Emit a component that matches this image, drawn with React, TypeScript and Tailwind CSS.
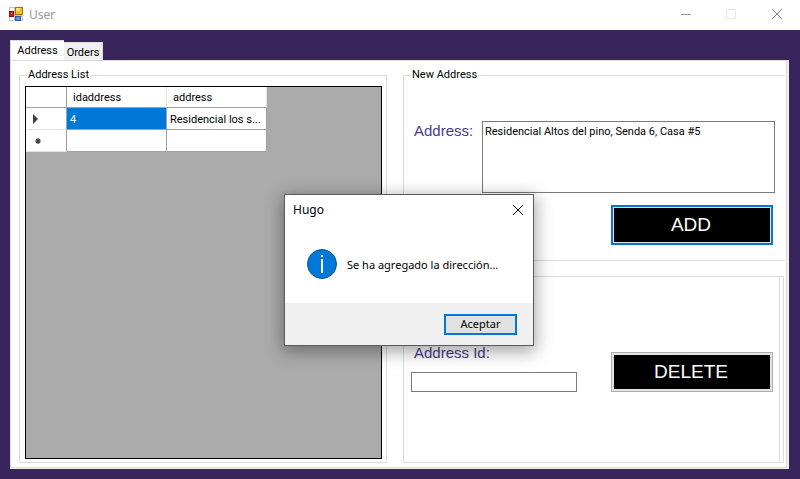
import { useState } from "react";

const ui = "font-['Roboto','Liberation_Sans',Arial,sans-serif]";
const segoe = "font-['Noto_Sans','Open_Sans',sans-serif]";
const large = "font-['Liberation_Sans',Arial,sans-serif]";

function FormIcon() {
  return (
    <svg width="14" height="14" viewBox="0 0 14 14" shapeRendering="crispEdges" aria-hidden="true">
      <rect width="14" height="14" fill="#c4c4c4" />
      <path d="M1 1h4v3H1zM1 10h4v3H1zM12 10h1v3h-1z" fill="#fff" />
      <rect x="0" y="4" width="5" height="6" fill="#8f1010" />
      <rect x="1" y="5" width="3" height="4" fill="#d8201c" />
      <rect x="2" y="6" width="1" height="1" fill="#f08a80" />
      <rect x="6" y="0" width="8" height="8" fill="#a87400" />
      <rect x="7" y="1" width="6" height="6" fill="#f5bd1f" />
      <rect x="7" y="1" width="4" height="3" fill="#ffe07a" />
      <rect x="6" y="9" width="6" height="5" fill="#2c5cb8" />
      <rect x="7" y="10" width="4" height="3" fill="#5a94ee" />
    </svg>
  );
}

function TitleBar() {
  return (
    <header className={`flex h-[30px] items-start justify-between bg-white pl-[9px] ${segoe}`}>
      <div className="flex h-[28px] items-center gap-[6px]">
        <FormIcon />
        <h1 className="pt-[2px] text-[12px] leading-4 text-[#999]">User</h1>
      </div>
      <div className="flex">
        <button type="button" aria-label="Minimize" className="flex h-[28px] w-[46px] items-center justify-center">
          <svg width="12" height="10" shapeRendering="crispEdges"><path d="M2 5h10v1H2z" fill="#999" /></svg>
        </button>
        <button type="button" aria-label="Maximize" disabled className="flex h-[28px] w-[46px] items-center justify-center">
          <svg width="10" height="10"><path d="M.5.5h9v9h-9z" fill="none" stroke="#e6e6e6" /></svg>
        </button>
        <button type="button" aria-label="Close" className="flex h-[28px] w-[46px] items-center justify-center">
          <svg width="10" height="10"><path d="M0 0l10 10M10 0L0 10" stroke="#888" /></svg>
        </button>
      </div>
    </header>
  );
}

function AddressTable() {
  return (
    <div className="grow border border-black bg-[#ababab]">
      <table className="table-fixed border-separate border-spacing-0 bg-white text-[11px] leading-4">
        <colgroup>
          <col className="w-[41px]" />
          <col className="w-[100px]" />
          <col className="w-[100px]" />
        </colgroup>
        <thead>
          <tr className="h-[21px]">
            <th className="w-[41px] border-r border-b border-[#a0a0a0] p-0" />
            <th className="w-[100px] border-r border-b border-r-[#e3e3e3] border-b-[#a0a0a0] p-0 pt-[2px] pl-[6px] text-left font-normal">idaddress</th>
            <th className="w-[100px] border-r border-b border-r-[#e3e3e3] border-b-[#a0a0a0] p-0 pt-[2px] pl-[6px] text-left font-normal">address</th>
          </tr>
        </thead>
        <tbody>
          <tr className="h-[22px]">
            <td className="border-r border-b border-r-[#a0a0a0] border-b-[#e3e3e3] p-0 pl-[7px]">
              <svg width="6" height="10"><path d="M0 0l5 5-5 5z" fill="#404040" /></svg>
            </td>
            <td className="border-r border-b border-[#a0a0a0] bg-[#0078d7] p-0 pt-[2px] pl-[3px] text-white">4</td>
            <td className="border-r border-b border-[#a0a0a0] p-0 pt-[2px] pl-[3px] whitespace-nowrap">Residencial los s...</td>
          </tr>
          <tr className="h-[22px]">
            <td className="border-r border-b border-r-[#a0a0a0] border-b-[#e3e3e3] p-0 pl-[9px]">
              <svg width="6" height="6"><path d="M3 0v6M0 3h6M1 1l4 4M5 1L1 5" stroke="#404040" strokeWidth="1.2" /></svg>
            </td>
            <td className="border-r border-b border-[#a0a0a0] p-0" />
            <td className="border-r border-b border-[#a0a0a0] p-0" />
          </tr>
        </tbody>
      </table>
    </div>
  );
}

function MessageBox({ onClose }: { onClose: () => void }) {
  return (
    <div
      role="dialog"
      aria-label="Hugo"
      className={`absolute top-[194px] left-[284px] flex h-[152px] w-[250px] flex-col border border-[#5a5a5a] bg-white text-black shadow-[0_4px_16px_2px_rgba(0,0,0,0.35)] ${segoe}`}
    >
      <div className="flex h-[30px] items-center justify-between pr-[10px] pl-2">
        <h2 className="text-[12px] leading-4">Hugo</h2>
        <button type="button" aria-label="Close" onClick={onClose}>
          <svg width="10" height="10"><path d="M0 0l10 10M10 0L0 10" stroke="#000" /></svg>
        </button>
      </div>
      <div className="flex grow items-center gap-[10px] pl-[22px]">
        <svg width="30" height="30" aria-hidden="true">
          <circle cx="15" cy="15" r="14.5" fill="#0078d7" stroke="#10548c" />
          <path d="M14 6h2v2h-2zM14 10h2v14h-2z" fill="#fff" />
        </svg>
        <p className="pt-[2px] text-[11px] leading-4">Se ha agregado la dirección...</p>
      </div>
      <div className="flex h-[42px] items-center justify-end bg-[#f0f0f0] pr-4">
        <button type="button" onClick={onClose} className="h-[21px] w-[73px] border-2 border-[#0078d7] bg-[#e1e1e1] text-[11px] leading-4">
          Aceptar
        </button>
      </div>
    </div>
  );
}

export default function App() {
  const [open, setOpen] = useState(true);
  const [address, setAddress] = useState("Residencial Altos del pino, Senda 6, Casa #5");
  return (
    <div className={`relative flex min-h-screen flex-col bg-[#38255c] text-[11px] text-black ${ui}`}>
      <TitleBar />
      <main className="flex grow flex-col pt-[10px] pr-[11px] pb-[10px] pl-[10px]">
        <div role="tablist" className="flex items-end text-[11px] leading-4">
          <button type="button" role="tab" aria-selected="true" className="-mb-px h-[21px] w-[54px] border-t border-l border-[#dcdcdc] bg-white">Address</button>
          <button type="button" role="tab" aria-selected="false" className="h-[18px] w-[39px] border-t border-r border-[#dcdcdc] bg-[#f0f0f0] pt-[2px]">Orders</button>
        </div>
        <div className="flex grow border-r-2 border-b border-[#f0f0f0]">
          <div className="grid grow grid-cols-[368fr_383fr] gap-4 border border-[#dcdcdc] bg-white pt-[6px] pb-1 pl-2">
            <fieldset className="flex min-w-0 flex-col border border-[#dcdcdc] pr-1 pb-[3px] pl-[5px]">
              <legend className="ml-[2px] px-[1px] leading-4">Address List</legend>
              <div className="flex grow flex-col pt-[3px]">
                <AddressTable />
              </div>
            </fieldset>
            <div className="flex min-w-0 flex-col gap-[15px]">
              <fieldset className="mr-px h-[194px] min-w-0 border border-r-0 border-[#dcdcdc] pr-[10px] pl-[10px]">
                <legend className="-ml-[3px] px-[1px] leading-4">New Address</legend>
                <div className="flex items-start justify-between pt-[38px]">
                  <label htmlFor="address" className={`text-[15px] leading-5 text-[#483d8b] ${large}`}>Address:</label>
                  <textarea
                    id="address"
                    value={address}
                    onChange={(e) => setAddress(e.target.value)}
                    className="h-[72px] w-[293px] resize-none border border-[#7a7a7a] bg-white px-[2px] pt-[2px] leading-4 outline-none"
                  />
                </div>
                <div className="flex justify-end pt-3 pr-[2px]">
                  <button type="button" className={`h-10 w-[162px] border-2 border-[#0078d7] bg-[#e1e1e1] p-px text-[19px] leading-6 text-white ${large}`}>
                    <span className="flex h-full items-center justify-center bg-black pr-[2px]">ADD</span>
                  </button>
                </div>
              </fieldset>
              <div className="mr-[2px] flex grow border border-[#dcdcdc]">
                <div className="mr-[3px] flex grow items-start justify-between border-r border-[#dcdcdc] pt-[66px] pr-[6px] pl-[7px]">
                  <div className="flex flex-col">
                    <label htmlFor="address-id" className={`pl-[3px] text-[15px] leading-5 text-[#483d8b] ${large}`}>Address Id:</label>
                    <input id="address-id" type="text" className="mt-[9px] h-5 w-[166px] border border-[#7a7a7a] bg-white px-1 outline-none" />
                  </div>
                  <button type="button" className={`mt-[9px] h-10 w-[162px] border border-[#adadad] bg-[#e1e1e1] p-[2px] text-[19px] leading-6 text-white ${large}`}>
                    <span className="flex h-full items-center justify-center bg-black pr-[2px]">DELETE</span>
                  </button>
                </div>
              </div>
            </div>
          </div>
        </div>
      </main>
      {open && <MessageBox onClose={() => setOpen(false)} />}
    </div>
  );
}
